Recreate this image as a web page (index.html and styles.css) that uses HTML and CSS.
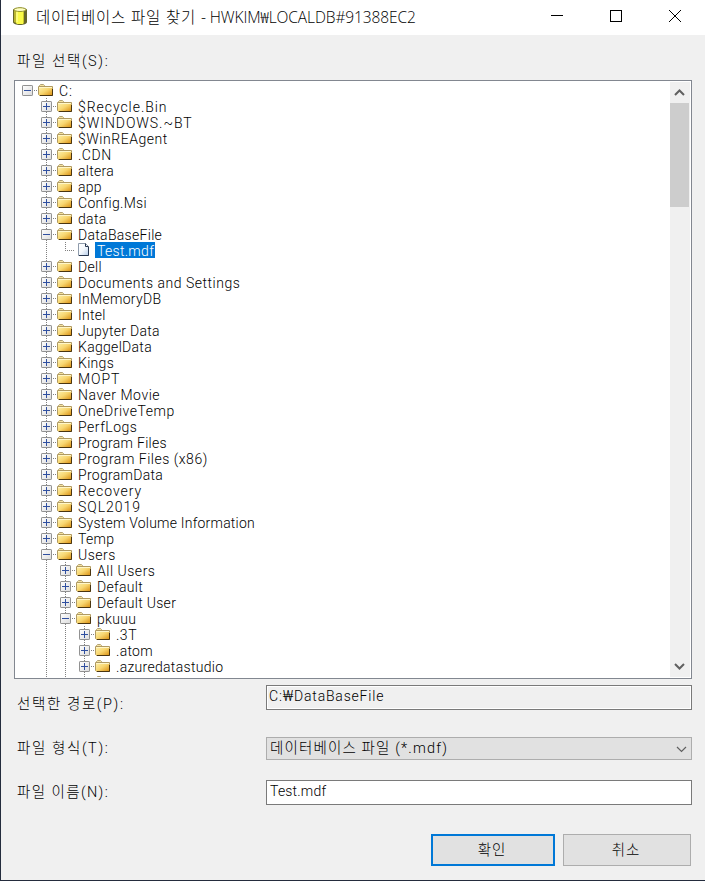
FILE: index.html
```html
<!DOCTYPE html>
<html lang="ko">
<head>
<meta charset="utf-8">
<title>데이터베이스 파일 찾기</title>
<link rel="stylesheet" href="styles.css">
</head>
<body>
<svg class="defs" aria-hidden="true">
  <defs>
    <linearGradient id="gold" x1="0" y1="0" x2="1" y2="1"><stop offset="0" stop-color="#fff3b0"/><stop offset=".5" stop-color="#f8d670"/><stop offset="1" stop-color="#d98e10"/></linearGradient>
    <linearGradient id="paper" x1="0" y1="0" x2="1" y2="1"><stop offset="0" stop-color="#fff"/><stop offset=".5" stop-color="#f4f8fd"/><stop offset="1" stop-color="#b4cbe8"/></linearGradient>
    <linearGradient id="btn" x1="0" y1="0" x2="1" y2="1"><stop offset="0" stop-color="#fff"/><stop offset="1" stop-color="#dcdcdc"/></linearGradient>
    <symbol id="folder" viewBox="0 0 16 16"><path d="M1.5 5V3.5L2.5 2.5H5.5L6.5 3.5V5" fill="#f5e3a0" stroke="#b3a376"/><path d="M.5 4.5H14.5V13.5H1.5L.5 12.5Z" fill="url(#gold)" stroke="#b09a62"/><path d="M1 5.5H14" stroke="#fff6c8"/><path d="M2 13.5H14.5V7" fill="none" stroke="#4a3510"/></symbol>
    <symbol id="file" viewBox="0 0 16 16"><path d="M2.5 1.5H9.5L12.5 4.5V13.5H2.5Z" fill="url(#paper)" stroke="#8f9bab"/><path d="M3 13.5H12.5V5M9.5 1.5V4.5H12.5" fill="none" stroke="#26364f"/></symbol>
    <symbol id="plus" viewBox="0 0 11 11"><rect x=".5" y=".5" width="10" height="10" rx=".6" fill="url(#btn)" stroke="#919191"/><path d="M2 5.5H9M5.5 2V9" stroke="#2f4fa0"/></symbol>
    <symbol id="minus" viewBox="0 0 11 11"><rect x=".5" y=".5" width="10" height="10" rx=".6" fill="url(#btn)" stroke="#919191"/><path d="M2 5.5H9" stroke="#2f4fa0"/></symbol>
  </defs>
</svg>
<div class="window">
  <header class="titlebar">
    <svg class="db" width="16" height="20" viewBox="0 0 16 20"><path d="M1 4C1 1 15 1 15 4V16C15 20 1 20 1 16Z" fill="#66662a"/><path d="M2 4H4V17L2 16Z" fill="#b9b52e"/><path d="M4 4H11V18H5L4 17Z" fill="#fafa48"/><path d="M11 4H12V17L11 18Z" fill="#c9c72c"/><ellipse cx="8" cy="3.6" rx="6" ry="1.9" fill="#ffffc4" stroke="#96952e"/><path d="M5 6V16" stroke="#ffffa8"/></svg>
    <h1>데이터베이스 파일 찾기 <span class="latin">- HWKIM₩LOCALDB#91388EC2</span></h1>
    <div class="controls">
      <svg width="12" height="12" viewBox="0 0 12 12"><path d="M0 5.5H12"/></svg>
      <svg width="12" height="12" viewBox="0 0 12 12"><rect x=".5" y=".5" width="11" height="11"/></svg>
      <svg width="12" height="12" viewBox="0 0 12 12"><path d="M0 0L12 12M12 0L0 12"/></svg>
    </div>
  </header>
  <main>
    <div class="caption">파일 선택(S):</div>
    <div class="tree">
      <div class="rows">
        <div class="row"><i class="col"><svg class="box"><use href="#minus"/></svg></i><svg class="icon"><use href="#folder"/></svg><span class="wide">C:</span></div>
        <div class="row"><i class="col"></i><i class="col line"><svg class="box"><use href="#plus"/></svg></i><svg class="icon"><use href="#folder"/></svg><span class="wide">$Recycle.Bin</span></div>
        <div class="row"><i class="col"></i><i class="col line"><svg class="box"><use href="#plus"/></svg></i><svg class="icon"><use href="#folder"/></svg><span class="wide">$WINDOWS.~BT</span></div>
        <div class="row"><i class="col"></i><i class="col line"><svg class="box"><use href="#plus"/></svg></i><svg class="icon"><use href="#folder"/></svg><span class="mid">$WinREAgent</span></div>
        <div class="row"><i class="col"></i><i class="col line"><svg class="box"><use href="#plus"/></svg></i><svg class="icon"><use href="#folder"/></svg><span class="mid">.CDN</span></div>
        <div class="row"><i class="col"></i><i class="col line"><svg class="box"><use href="#plus"/></svg></i><svg class="icon"><use href="#folder"/></svg><span>altera</span></div>
        <div class="row"><i class="col"></i><i class="col line"><svg class="box"><use href="#plus"/></svg></i><svg class="icon"><use href="#folder"/></svg><span>app</span></div>
        <div class="row"><i class="col"></i><i class="col line"><svg class="box"><use href="#plus"/></svg></i><svg class="icon"><use href="#folder"/></svg><span>Config.Msi</span></div>
        <div class="row"><i class="col"></i><i class="col line"><svg class="box"><use href="#plus"/></svg></i><svg class="icon"><use href="#folder"/></svg><span>data</span></div>
        <div class="row"><i class="col"></i><i class="col line"><svg class="box"><use href="#minus"/></svg></i><svg class="icon"><use href="#folder"/></svg><span>DataBaseFile</span></div>
        <div class="row"><i class="col"></i><i class="col line guide"></i><i class="col line elbow"></i><svg class="icon"><use href="#file"/></svg><span class="selected">Test.mdf</span></div>
        <div class="row"><i class="col"></i><i class="col line"><svg class="box"><use href="#plus"/></svg></i><svg class="icon"><use href="#folder"/></svg><span>Dell</span></div>
        <div class="row"><i class="col"></i><i class="col line"><svg class="box"><use href="#plus"/></svg></i><svg class="icon"><use href="#folder"/></svg><span class="mid">Documents and Settings</span></div>
        <div class="row"><i class="col"></i><i class="col line"><svg class="box"><use href="#plus"/></svg></i><svg class="icon"><use href="#folder"/></svg><span>InMemoryDB</span></div>
        <div class="row"><i class="col"></i><i class="col line"><svg class="box"><use href="#plus"/></svg></i><svg class="icon"><use href="#folder"/></svg><span>Intel</span></div>
        <div class="row"><i class="col"></i><i class="col line"><svg class="box"><use href="#plus"/></svg></i><svg class="icon"><use href="#folder"/></svg><span>Jupyter Data</span></div>
        <div class="row"><i class="col"></i><i class="col line"><svg class="box"><use href="#plus"/></svg></i><svg class="icon"><use href="#folder"/></svg><span>KaggelData</span></div>
        <div class="row"><i class="col"></i><i class="col line"><svg class="box"><use href="#plus"/></svg></i><svg class="icon"><use href="#folder"/></svg><span>Kings</span></div>
        <div class="row"><i class="col"></i><i class="col line"><svg class="box"><use href="#plus"/></svg></i><svg class="icon"><use href="#folder"/></svg><span class="wide">MOPT</span></div>
        <div class="row"><i class="col"></i><i class="col line"><svg class="box"><use href="#plus"/></svg></i><svg class="icon"><use href="#folder"/></svg><span class="mid">Naver Movie</span></div>
        <div class="row"><i class="col"></i><i class="col line"><svg class="box"><use href="#plus"/></svg></i><svg class="icon"><use href="#folder"/></svg><span class="mid">OneDriveTemp</span></div>
        <div class="row"><i class="col"></i><i class="col line"><svg class="box"><use href="#plus"/></svg></i><svg class="icon"><use href="#folder"/></svg><span class="mid">PerfLogs</span></div>
        <div class="row"><i class="col"></i><i class="col line"><svg class="box"><use href="#plus"/></svg></i><svg class="icon"><use href="#folder"/></svg><span>Program Files</span></div>
        <div class="row"><i class="col"></i><i class="col line"><svg class="box"><use href="#plus"/></svg></i><svg class="icon"><use href="#folder"/></svg><span class="mid">Program Files (x86)</span></div>
        <div class="row"><i class="col"></i><i class="col line"><svg class="box"><use href="#plus"/></svg></i><svg class="icon"><use href="#folder"/></svg><span>ProgramData</span></div>
        <div class="row"><i class="col"></i><i class="col line"><svg class="box"><use href="#plus"/></svg></i><svg class="icon"><use href="#folder"/></svg><span class="wide">Recovery</span></div>
        <div class="row"><i class="col"></i><i class="col line"><svg class="box"><use href="#plus"/></svg></i><svg class="icon"><use href="#folder"/></svg><span class="wide">SQL2019</span></div>
        <div class="row"><i class="col"></i><i class="col line"><svg class="box"><use href="#plus"/></svg></i><svg class="icon"><use href="#folder"/></svg><span class="tight">System Volume Information</span></div>
        <div class="row"><i class="col"></i><i class="col line"><svg class="box"><use href="#plus"/></svg></i><svg class="icon"><use href="#folder"/></svg><span>Temp</span></div>
        <div class="row"><i class="col"></i><i class="col line"><svg class="box"><use href="#minus"/></svg></i><svg class="icon"><use href="#folder"/></svg><span class="mid">Users</span></div>
        <div class="row"><i class="col"></i><i class="col line guide"></i><i class="col line"><svg class="box"><use href="#plus"/></svg></i><svg class="icon"><use href="#folder"/></svg><span class="mid">All Users</span></div>
        <div class="row"><i class="col"></i><i class="col line guide"></i><i class="col line"><svg class="box"><use href="#plus"/></svg></i><svg class="icon"><use href="#folder"/></svg><span>Default</span></div>
        <div class="row"><i class="col"></i><i class="col line guide"></i><i class="col line"><svg class="box"><use href="#plus"/></svg></i><svg class="icon"><use href="#folder"/></svg><span>Default User</span></div>
        <div class="row"><i class="col"></i><i class="col line guide"></i><i class="col line"><svg class="box"><use href="#minus"/></svg></i><svg class="icon"><use href="#folder"/></svg><span>pkuuu</span></div>
        <div class="row"><i class="col"></i><i class="col line guide"></i><i class="col line guide"></i><i class="col line"><svg class="box"><use href="#plus"/></svg></i><svg class="icon"><use href="#folder"/></svg><span class="mid">.3T</span></div>
        <div class="row"><i class="col"></i><i class="col line guide"></i><i class="col line guide"></i><i class="col line"><svg class="box"><use href="#plus"/></svg></i><svg class="icon"><use href="#folder"/></svg><span>.atom</span></div>
        <div class="row"><i class="col"></i><i class="col line guide"></i><i class="col line guide"></i><i class="col line"><svg class="box"><use href="#plus"/></svg></i><svg class="icon"><use href="#folder"/></svg><span>.azuredatastudio</span></div>
        <div class="row"><i class="col"></i><i class="col line guide"></i><i class="col line guide"></i><i class="col line"></i><svg class="icon"><use href="#folder"/></svg></div>
      </div>
      <div class="scrollbar">
        <svg width="19" height="21" viewBox="0 0 19 21"><path d="M5 13L9.5 8.5L14 13"/></svg>
        <div class="thumb"></div>
        <svg class="down" width="19" height="21" viewBox="0 0 19 21"><path d="M5 8L9.5 12.5L14 8"/></svg>
      </div>
    </div>
    <div class="form">
      <div class="field path"><label>선택한 경로(P):</label><div class="input readonly">C:₩DataBaseFile</div></div>
      <div class="field type"><label>파일 형식(T):</label><div class="select"><span>데이터베이스 파일 (*.mdf)</span><svg width="11" height="7" viewBox="0 0 11 7"><path d="M1 1L5.5 5.5L10 1"/></svg></div></div>
      <div class="field name"><label>파일 이름(N):</label><div class="input">Test.mdf</div></div>
    </div>
    <div class="buttons"><button class="primary">확인</button><button>취소</button></div>
  </main>
</div>
</body>
</html>
```
FILE: styles.css
```css
* { box-sizing: border-box; }
body { margin: 0; color: #000; font: 300 14px/16px Roboto, "Noto Sans CJK KR", sans-serif; }
.defs { position: absolute; width: 0; height: 0; }
.window { width: 705px; height: 881px; background: #f0f0f0; border-left: 1px solid #242c3d; border-bottom: 1px solid #242c3d; overflow: hidden; }
.titlebar { display: flex; height: 35px; padding: 6px 24px 0 11px; background: #fff; }
.db { flex: none; }
h1 { flex: 1; margin: 0 0 0 8px; font: 300 15.5px/20px "Noto Sans CJK KR", sans-serif; letter-spacing: .72px; white-space: nowrap; }
.latin { font-family: "Open Sans", "Noto Sans CJK KR", sans-serif; font-weight: 300; letter-spacing: -.1px; }
.controls { display: flex; gap: 47px; padding-top: 4px; }
.controls svg { fill: none; stroke: #000; }
main { padding: 0 13px; }
.caption { height: 45px; padding: 19px 3px 0; font-size: 14.5px; letter-spacing: 1.6px; }
.tree { display: flex; width: 678px; height: 599px; padding: 1px; border: 1px solid #828790; background: #fff; overflow: hidden; }
.rows { flex: 1; padding-left: 2px; overflow: hidden; }
.row { display: flex; height: 16px; white-space: nowrap; }
.row span { height: 16px; margin-left: 3px; padding: 0 2px; letter-spacing: .3px; line-height: 18px; }
.row .tight { letter-spacing: .22px; }
.row .mid { letter-spacing: .52px; }
.row .wide { letter-spacing: .95px; }
.row .selected { width: 60px; background: #0078d7; color: #fff; }
.col { flex: none; display: block; width: 19px; height: 16px; padding: 3px 0 0 4px; background: repeating-linear-gradient(to right, #808080 0 1px, transparent 1px 2px) 16px 8px / 3px 1px no-repeat; }
.col:empty { background: none; }
.col.line { background: repeating-linear-gradient(to bottom, #808080 0 1px, transparent 1px 2px) 9px 0 / 1px 16px no-repeat, repeating-linear-gradient(to right, #808080 0 1px, transparent 1px 2px) 16px 8px / 3px 1px no-repeat; }
.col.guide { background-size: 1px 16px, 0 0; }
.col.elbow { background-size: 1px 9px, 10px 1px; background-position: 9px 0, 9px 8px; }
.box { display: block; width: 11px; height: 11px; }
.icon { flex: none; width: 16px; height: 16px; margin-left: 1px; }
.scrollbar { display: flex; flex-direction: column; width: 20px; background: #f0f0f0; }
.scrollbar svg { fill: none; stroke: #606060; stroke-width: 2; }
.thumb { width: 19px; height: 104px; background: #cdcdcd; }
.down { margin-top: auto; }
.form { padding: 6px 0 0 3px; font-size: 14.5px; letter-spacing: 1.6px; }
.field { display: flex; width: 675px; height: 25px; }
.field label { width: 249px; padding-top: 12px; }
.field.type { height: 23px; margin-top: 27px; }
.field.type label { padding-top: 4px; }
.field.name { margin-top: 20px; }
.field.name label { padding-top: 5px; letter-spacing: 1.4px; }
.input { flex: 1; height: 25px; padding: 2px 3px; border: 1px solid #7a7a7a; background: #fff; font-size: 14px; letter-spacing: .2px; }
.readonly { padding: 2px; background: #f0f0f0; box-shadow: inset 0 0 0 1px #fff; letter-spacing: .8px; }
.select { display: flex; flex: 1; align-items: center; justify-content: space-between; height: 23px; padding: 1px 4px 0 3px; border: 1px solid #adadad; background: #e1e1e1; letter-spacing: 1.15px; }
.select svg { fill: none; stroke: #606060; stroke-width: 1.2; }
.buttons { display: flex; gap: 8px; justify-content: flex-end; width: 677px; margin-top: 29px; }
button { width: 128px; height: 32px; padding: 1px 2px 0 0; border: 1px solid #adadad; background: #e1e1e1; color: #000; font: inherit; font-size: 14.5px; letter-spacing: 1px; }
button.primary { width: 124px; border: 2px solid #0078d7; }
```
